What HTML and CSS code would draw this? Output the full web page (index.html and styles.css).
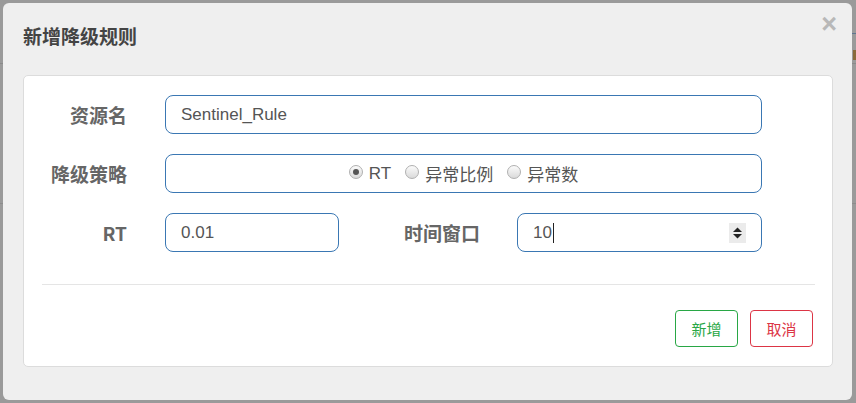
FILE: index.html
```html
<!DOCTYPE html>
<html lang="zh">
<head>
<meta charset="utf-8">
<title>新增降级规则</title>
<link rel="stylesheet" href="styles.css">
</head>
<body>
<div class="modal">
  <div class="modal-header">
    <h4 class="modal-title">新增降级规则</h4>
    <span class="close">×</span>
  </div>
  <div class="panel">
    <div class="form-row">
      <label class="lbl">资源名</label>
      <div class="field wide"><span class="val">Sentinel_Rule</span></div>
    </div>
    <div class="form-row">
      <label class="lbl">降级策略</label>
      <div class="field wide radios">
        <span class="radio checked"></span><span class="rtext">RT</span>
        <span class="radio"></span><span class="rtext">异常比例</span>
        <span class="radio"></span><span class="rtext">异常数</span>
      </div>
    </div>
    <div class="form-row">
      <label class="lbl">RT</label>
      <div class="field rt"><span class="val">0.01</span></div>
      <label class="lbl lbl2">时间窗口</label>
      <div class="field win">
        <span class="val">10</span><span class="caret"></span>
        <span class="spinner">
          <svg width="17" height="20" viewBox="0 0 17 20"><rect width="17" height="20" fill="#ebebeb"/><path d="M4 9 L8.5 4.5 L13 9 Z" fill="#222"/><path d="M4 11 L8.5 15.5 L13 11 Z" fill="#222"/></svg>
        </span>
      </div>
    </div>
    <hr class="divider">
    <div class="actions">
      <button class="btn btn-ok">新增</button>
      <button class="btn btn-cancel">取消</button>
    </div>
  </div>
</div>
</body>
</html>
```
FILE: styles.css
```css
html, body {
  margin: 0;
  padding: 0;
}
body {
  width: 856px;
  height: 403px;
  overflow: hidden;
  background-color: #9a9a9a;
  background-image:
    linear-gradient(#8a8a8a, #8a8a8a),
    linear-gradient(#8c8c8c, #8c8c8c),
    linear-gradient(#5f7590, #5f7590),
    linear-gradient(#8a6a3a, #8a6a3a);
  background-size: 100% 1px, 100% 1px, 4px 1px, 4px 10px;
  background-position: 0 63px, 0 203px, 852px 33px, 853px 50px;
  background-repeat: no-repeat;
  font-family: "Liberation Sans", "Noto Sans CJK SC", sans-serif;
  padding-top: 3px;
  box-sizing: border-box;
}
.modal {
  margin-left: 3px;
  width: 849px;
  height: 397px;
  background: #efefef;
  border-radius: 6px;
  box-sizing: border-box;
  padding: 0 19px 0 20px;
  display: flex;
  flex-direction: column;
}
.modal-header {
  height: 72px;
  display: flex;
  align-items: flex-start;
  justify-content: space-between;
}
.modal-title {
  margin: 21px 0 0 0;
  font-size: 19px;
  font-weight: bold;
  color: #444;
  font-family: "Noto Sans CJK SC", sans-serif;
  line-height: 24px;
}
.close {
  margin-top: 7px;
  margin-right: -4px;
  font-size: 27px;
  font-weight: bold;
  color: #b8b8b8;
  line-height: 28px;
  font-family: "Liberation Sans", sans-serif;
}
.panel {
  background: #fff;
  border: 1px solid #dcdcdc;
  border-radius: 5px;
  height: 292px;
  box-sizing: border-box;
  padding: 19px 19px 0 0;
  display: flex;
  flex-direction: column;
}
.form-row {
  display: flex;
  align-items: center;
  height: 39px;
  margin-bottom: 20px;
}
.lbl {
  width: 103px;
  text-align: right;
  font-family: "Noto Sans CJK SC", sans-serif;
  font-weight: bold;
  font-size: 19px;
  color: #666;
  margin-right: 38px;
}
.lbl2 {
  width: 141px;
  margin-right: 37px;
}
.field {
  height: 39px;
  box-sizing: border-box;
  border: 1px solid #3a77b3;
  border-radius: 8px;
  display: flex;
  align-items: center;
  padding-left: 15px;
  font-size: 17px;
  color: #555;
}
.wide { width: 597px; }
.rt { width: 174px; }
.win { width: 245px; padding-right: 15px; }
.val { line-height: 20px; }
.caret {
  width: 1px;
  height: 20px;
  background: #222;
  margin-left: 1px;
}
.spinner {
  margin-left: auto;
  display: flex;
}
.radios {
  justify-content: center;
  padding-left: 0;
  font-size: 17px;
  font-family: "Liberation Sans", "Noto Sans CJK SC", sans-serif;
}
.radio {
  width: 14px;
  height: 14px;
  box-sizing: border-box;
  border-radius: 50%;
  border: 1px solid #b0b0b0;
  background: linear-gradient(#fbfbfb, #dadada);
  margin-right: 6px;
  margin-top: -3px;
  position: relative;
}
.radio.checked::after {
  content: "";
  position: absolute;
  left: 3px;
  top: 3px;
  width: 6px;
  height: 6px;
  border-radius: 50%;
  background: #555;
}
.rtext {
  margin-right: 14px;
  color: #555;
}
.rtext:last-child { margin-right: 0; }
.divider {
  border: 0;
  border-top: 1px solid #e5e5e5;
  margin: 12px 0 25px 18px;
  width: 773px;
}
.actions {
  display: flex;
  justify-content: flex-end;
  gap: 12px;
}
.btn {
  height: 37px;
  width: 63px;
  border-radius: 4px;
  background: #fff;
  font-family: "Noto Sans CJK SC", sans-serif;
  font-size: 15px;
  padding: 0;
}
.btn-ok {
  border: 1px solid #28a745;
  color: #28a745;
}
.btn-cancel {
  border: 1px solid #dc3545;
  color: #dc3545;
}
```
